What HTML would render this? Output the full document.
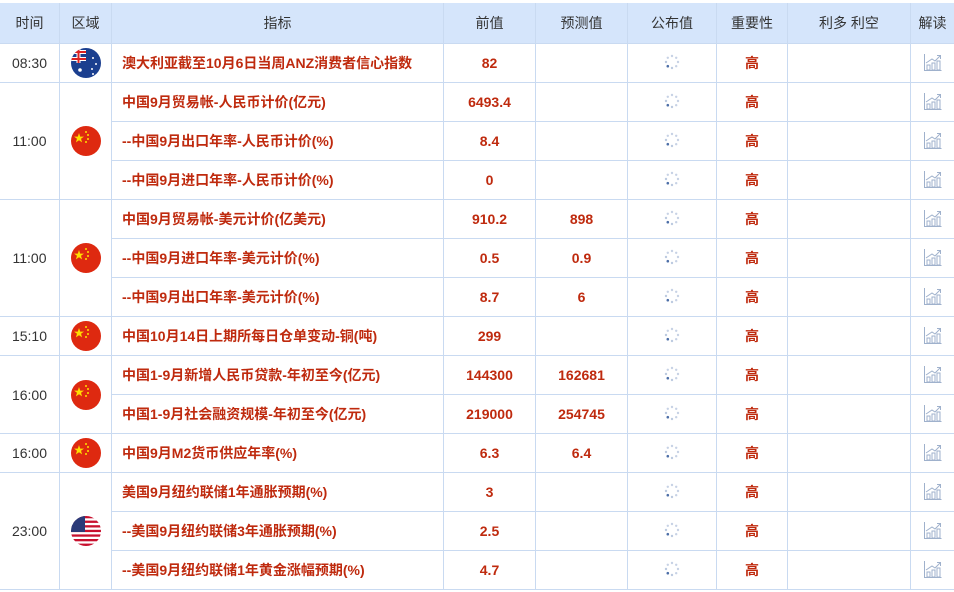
<!DOCTYPE html>
<html><head><meta charset="utf-8"><style>
html,body{margin:0;padding:0;background:#fff;width:954px;height:589px;overflow:hidden}
body{padding-top:3px;font-family:"Liberation Sans","Noto Sans CJK SC",sans-serif}
table{border-collapse:collapse;table-layout:fixed;width:955px;margin-left:-1px}
td,th{border:1px solid #c9daf1;padding:0;text-align:center;font-size:14px;height:38px;overflow:hidden;white-space:nowrap}
th{background:#d5e5fb;font-weight:normal;color:#333;height:40px;border-top:none}
td.t{color:#333}
td.n{text-align:left;padding-left:10px;color:#bf2a0e;font-weight:bold}
td.v{color:#bf2a0e;font-weight:bold}
td.h{color:#bf2a0e;font-weight:bold}
.fl{display:inline-block;width:30px;height:30px;border-radius:50%;vertical-align:middle;overflow:hidden}
</style></head><body>
<svg width="0" height="0" style="position:absolute">
<defs>
<symbol id="cn" viewBox="0 0 30 30"><rect width="30" height="30" fill="#de2910"/><polygon points="8,7 9.2,10.6 13,10.6 10,12.8 11.1,16.4 8,14.2 4.9,16.4 6,12.8 3,10.6 6.8,10.6" fill="#ffde00"/><circle cx="15" cy="6" r="1" fill="#ffde00"/><circle cx="17" cy="9" r="1" fill="#ffde00"/><circle cx="17" cy="13" r="1" fill="#ffde00"/><circle cx="15" cy="16" r="1" fill="#ffde00"/></symbol>
<symbol id="ld" viewBox="0 0 16 16"><g fill="#8fa6cc"><circle cx="8" cy="2" r="1.2" opacity=".5"/><circle cx="12.2" cy="3.8" r="1.2" opacity=".5"/><circle cx="14" cy="8" r="1.2" opacity=".5"/><circle cx="12.2" cy="12.2" r="1.2" opacity=".5"/><circle cx="8" cy="14" r="1.2" opacity=".6"/><circle cx="3.8" cy="12.2" r="1.3" fill="#4d6fa8"/><circle cx="2" cy="8" r="1.2" opacity=".6"/><circle cx="3.8" cy="3.8" r="1.2" opacity=".5"/></g></symbol>
<symbol id="ch" viewBox="0 0 20 20"><g fill="none" stroke="#9fb1cc" stroke-width="1"><path d="M1.5 2v16.5h17"/><rect x="4" y="13" width="3" height="5"/><rect x="9" y="11" width="3" height="7"/><rect x="14" y="9" width="3" height="9"/><path d="M3 11l6-4 3 2 5-5"/><path d="M14 3.5h3.5v3.5"/></g></symbol>
</defs></svg>
<table>
<colgroup><col style="width:60px"><col style="width:52px"><col style="width:332px"><col style="width:92px"><col style="width:92px"><col style="width:89px"><col style="width:71px"><col style="width:123px"><col style="width:44px"></colgroup>
<tr><th>时间</th><th>区域</th><th>指标</th><th>前值</th><th>预测值</th><th>公布值</th><th>重要性</th><th>利多 利空</th><th>解读</th></tr>
<tr><td class="t">08:30</td><td><span class="fl"><svg width="30" height="30" viewBox="0 0 30 30"><rect width="30" height="30" fill="#1b3f8f"/><path d="M0 4h15M0 11h15M7.5 0v15" stroke="#fff" stroke-width="4"/><path d="M0 4h15M0 11h15M7.5 0v15" stroke="#d22" stroke-width="2"/><circle cx="9" cy="22" r="1.8" fill="#fff"/><circle cx="22" cy="10" r="1" fill="#fff"/><circle cx="25" cy="16" r="1" fill="#fff"/><circle cx="21" cy="21" r="1" fill="#fff"/><circle cx="22" cy="26" r="1" fill="#fff"/></svg></span></td><td class="n">澳大利亚截至10月6日当周ANZ消费者信心指数</td><td class="v">82</td><td class="v"></td><td><svg width="16" height="16"><use href="#ld"/></svg></td><td class="h">高</td><td></td><td><svg width="20" height="20"><use href="#ch"/></svg></td></tr>
<tr><td class="t" rowspan="3">11:00</td><td rowspan="3"><svg class="fl" width="30" height="30"><use href="#cn"/></svg></td><td class="n">中国9月贸易帐-人民币计价(亿元)</td><td class="v">6493.4</td><td class="v"></td><td><svg width="16" height="16"><use href="#ld"/></svg></td><td class="h">高</td><td></td><td><svg width="20" height="20"><use href="#ch"/></svg></td></tr>
<tr><td class="n">--中国9月出口年率-人民币计价(%)</td><td class="v">8.4</td><td class="v"></td><td><svg width="16" height="16"><use href="#ld"/></svg></td><td class="h">高</td><td></td><td><svg width="20" height="20"><use href="#ch"/></svg></td></tr>
<tr><td class="n">--中国9月进口年率-人民币计价(%)</td><td class="v">0</td><td class="v"></td><td><svg width="16" height="16"><use href="#ld"/></svg></td><td class="h">高</td><td></td><td><svg width="20" height="20"><use href="#ch"/></svg></td></tr>
<tr><td class="t" rowspan="3">11:00</td><td rowspan="3"><svg class="fl" width="30" height="30"><use href="#cn"/></svg></td><td class="n">中国9月贸易帐-美元计价(亿美元)</td><td class="v">910.2</td><td class="v">898</td><td><svg width="16" height="16"><use href="#ld"/></svg></td><td class="h">高</td><td></td><td><svg width="20" height="20"><use href="#ch"/></svg></td></tr>
<tr><td class="n">--中国9月进口年率-美元计价(%)</td><td class="v">0.5</td><td class="v">0.9</td><td><svg width="16" height="16"><use href="#ld"/></svg></td><td class="h">高</td><td></td><td><svg width="20" height="20"><use href="#ch"/></svg></td></tr>
<tr><td class="n">--中国9月出口年率-美元计价(%)</td><td class="v">8.7</td><td class="v">6</td><td><svg width="16" height="16"><use href="#ld"/></svg></td><td class="h">高</td><td></td><td><svg width="20" height="20"><use href="#ch"/></svg></td></tr>
<tr><td class="t">15:10</td><td><svg class="fl" width="30" height="30"><use href="#cn"/></svg></td><td class="n">中国10月14日上期所每日仓单变动-铜(吨)</td><td class="v">299</td><td class="v"></td><td><svg width="16" height="16"><use href="#ld"/></svg></td><td class="h">高</td><td></td><td><svg width="20" height="20"><use href="#ch"/></svg></td></tr>
<tr><td class="t" rowspan="2">16:00</td><td rowspan="2"><svg class="fl" width="30" height="30"><use href="#cn"/></svg></td><td class="n">中国1-9月新增人民币贷款-年初至今(亿元)</td><td class="v">144300</td><td class="v">162681</td><td><svg width="16" height="16"><use href="#ld"/></svg></td><td class="h">高</td><td></td><td><svg width="20" height="20"><use href="#ch"/></svg></td></tr>
<tr><td class="n">中国1-9月社会融资规模-年初至今(亿元)</td><td class="v">219000</td><td class="v">254745</td><td><svg width="16" height="16"><use href="#ld"/></svg></td><td class="h">高</td><td></td><td><svg width="20" height="20"><use href="#ch"/></svg></td></tr>
<tr><td class="t">16:00</td><td><svg class="fl" width="30" height="30"><use href="#cn"/></svg></td><td class="n">中国9月M2货币供应年率(%)</td><td class="v">6.3</td><td class="v">6.4</td><td><svg width="16" height="16"><use href="#ld"/></svg></td><td class="h">高</td><td></td><td><svg width="20" height="20"><use href="#ch"/></svg></td></tr>
<tr><td class="t" rowspan="3">23:00</td><td rowspan="3"><span class="fl"><svg width="30" height="30" viewBox="0 0 30 30"><rect width="30" height="30" fill="#fff"/><g fill="#c8102e"><rect y="0" width="30" height="2.3"/><rect y="4.6" width="30" height="2.3"/><rect y="9.2" width="30" height="2.3"/><rect y="13.8" width="30" height="2.3"/><rect y="18.4" width="30" height="2.3"/><rect y="23" width="30" height="2.3"/><rect y="27.6" width="30" height="2.4"/></g><rect width="14" height="16" fill="#2b3a78"/></svg></span></td><td class="n">美国9月纽约联储1年通胀预期(%)</td><td class="v">3</td><td class="v"></td><td><svg width="16" height="16"><use href="#ld"/></svg></td><td class="h">高</td><td></td><td><svg width="20" height="20"><use href="#ch"/></svg></td></tr>
<tr><td class="n">--美国9月纽约联储3年通胀预期(%)</td><td class="v">2.5</td><td class="v"></td><td><svg width="16" height="16"><use href="#ld"/></svg></td><td class="h">高</td><td></td><td><svg width="20" height="20"><use href="#ch"/></svg></td></tr>
<tr><td class="n">--美国9月纽约联储1年黄金涨幅预期(%)</td><td class="v">4.7</td><td class="v"></td><td><svg width="16" height="16"><use href="#ld"/></svg></td><td class="h">高</td><td></td><td><svg width="20" height="20"><use href="#ch"/></svg></td></tr>
</table>
</body></html>
